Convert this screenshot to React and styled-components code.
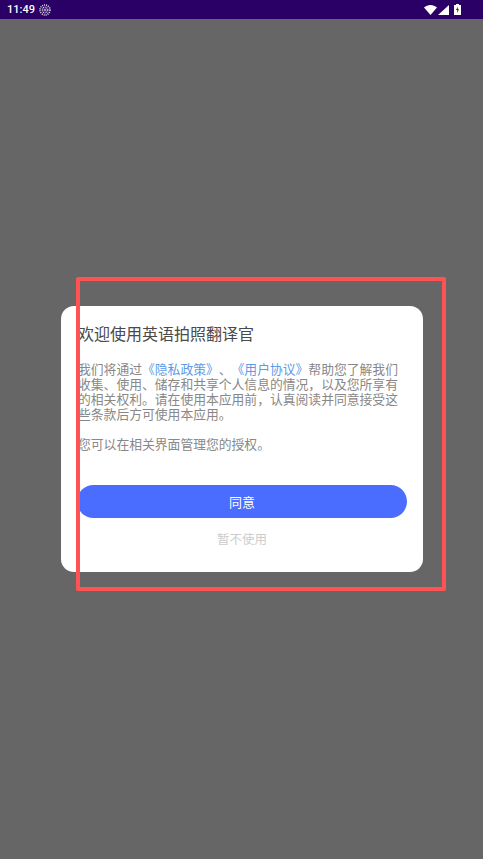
import React from 'react'
import styled, { createGlobalStyle } from 'styled-components'

const GlobalStyle = createGlobalStyle`
  html, body {
    margin: 0;
    padding: 0;
    height: 100%;
    background-color: #666666;
    font-family: "Roboto", "Noto Sans CJK SC", sans-serif;
  }
`

const Screen = styled.div`
  position: relative;
  width: 483px;
  height: 859px;
  overflow: hidden;
  display: flex;
  flex-direction: column;
  background-color: #666666;
`

const StatusBar = styled.div`
  height: 19px;
  flex-shrink: 0;
  display: flex;
  align-items: center;
  padding: 0 22px 0 7px;
  background-color: #2a0066;
  color: #ffffff;
`

const Clock = styled.span`
  font-size: 11px;
  font-weight: 500;
  margin-right: 4px;
`

const StatusIcons = styled.div`
  margin-left: auto;
  display: flex;
  align-items: center;
  gap: 1px;
`

const BatterySlot = styled.span`
  display: flex;
  margin-left: 4px;
`

const Main = styled.main`
  flex: 1;
  padding: 287px 60px 0 61px;
`

const Dialog = styled.section`
  height: 266px;
  box-sizing: border-box;
  padding: 18px 16px 0;
  display: flex;
  flex-direction: column;
  background-color: #ffffff;
  border-radius: 13px;
`

const Title = styled.h1`
  margin: 0;
  font-size: 16px;
  line-height: 22px;
  font-weight: 400;
  color: #4a4a4a;
  padding-left: 1px;
`

const Body = styled.p`
  margin: 16px 0 0;
  padding-left: 1px;
  width: 322px;
  font-size: 12.8px;
  line-height: 15px;
  color: #888888;
  white-space: nowrap;
  text-spacing-trim: space-all;
`

const Link = styled.a`
  color: #5b9be8;
  text-decoration: none;
`

const AgreeButton = styled.button`
  margin-top: 33px;
  height: 33px;
  width: 330px;
  border: 0;
  border-radius: 17px;
  background-color: #4a6cff;
  color: #ffffff;
  font-family: inherit;
  font-size: 13px;
`

const DeclineButton = styled.button`
  margin-top: 14px;
  padding: 0;
  border: 0;
  background: none;
  color: #cccccc;
  font-family: inherit;
  font-size: 12.5px;
  line-height: 16px;
`

const Highlight = styled.div`
  position: absolute;
  left: 76px;
  top: 277px;
  width: 362px;
  height: 306px;
  border: 4px solid #ff5252;
  border-radius: 2px;
  pointer-events: none;
`

const LoadingIcon = () => (
  <svg width="12" height="12" viewBox="0 0 12 12" fill="none" stroke="#e4def2">
    <circle cx="6" cy="6" r="5" strokeWidth="1.6" strokeDasharray="1 1" />
    <circle cx="6" cy="6" r="2.8" strokeWidth="1.2" strokeDasharray="1 0.8" />
    <circle cx="6" cy="6" r="1" strokeWidth="0.8" />
  </svg>
)

const WifiIcon = () => (
  <svg width="13" height="10" viewBox="0 0 13 10">
    <path d="M0 2.6 C3.6 -0.8 9.4 -0.8 13 2.6 L6.5 10 Z" fill="#fff" />
  </svg>
)

const SignalIcon = () => (
  <svg width="11" height="10" viewBox="0 0 11 10">
    <path d="M11 0 V10 H0 Z" fill="#fff" />
  </svg>
)

const BatteryIcon = () => (
  <svg width="7" height="11" viewBox="0 0 7 11">
    <path d="M2 0 H5 V1 H7 V11 H0 V1 H2 Z" fill="#fff" />
    <path d="M4 2.5 L2 6 H3.4 L3 9 L5 5.3 H3.6 Z" fill="#2a0066" />
  </svg>
)

const App = () => (
  <Screen>
    <GlobalStyle />
    <StatusBar>
      <Clock>11:49</Clock>
      <LoadingIcon />
      <StatusIcons>
        <WifiIcon />
        <SignalIcon />
        <BatterySlot>
          <BatteryIcon />
        </BatterySlot>
      </StatusIcons>
    </StatusBar>
    <Main>
      <Dialog>
        <Title>欢迎使用英语拍照翻译官</Title>
        <Body>
          我们将通过<Link>《隐私政策》</Link>、<Link>《用户协议》</Link>帮助您了解我们
          <br />
          收集、使用、储存和共享个人信息的情况，以及您所享有
          <br />
          的相关权利。请在使用本应用前，认真阅读并同意接受这
          <br />
          些条款后方可使用本应用。
          <br />
          <br />
          您可以在相关界面管理您的授权。
        </Body>
        <AgreeButton>同意</AgreeButton>
        <DeclineButton>暂不使用</DeclineButton>
      </Dialog>
    </Main>
    <Highlight />
  </Screen>
)

export default App
